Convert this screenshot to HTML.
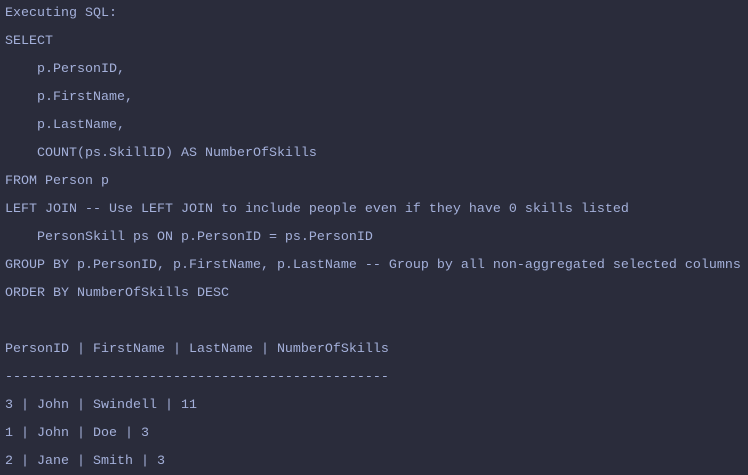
<!DOCTYPE html>
<html><head><style>
html,body{margin:0;padding:0;background:#2a2c3b;width:748px;height:475px;overflow:hidden}
pre{margin:0;padding:0 0 0 5px;font-family:"Liberation Mono",monospace;font-size:13.33px;line-height:28px;color:#a4b0da}
</style></head><body><pre>Executing SQL:
SELECT
    p.PersonID,
    p.FirstName,
    p.LastName,
    COUNT(ps.SkillID) AS NumberOfSkills
FROM Person p
LEFT JOIN -- Use LEFT JOIN to include people even if they have 0 skills listed
    PersonSkill ps ON p.PersonID = ps.PersonID
GROUP BY p.PersonID, p.FirstName, p.LastName -- Group by all non-aggregated selected columns
ORDER BY NumberOfSkills DESC

PersonID | FirstName | LastName | NumberOfSkills
------------------------------------------------
3 | John | Swindell | 11
1 | John | Doe | 3
2 | Jane | Smith | 3</pre></body></html>
